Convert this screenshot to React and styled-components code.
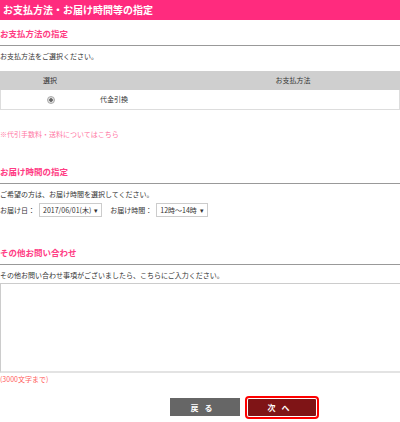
import React from "react";
import styled, { createGlobalStyle } from "styled-components";

const Global = createGlobalStyle`
  body { margin: 0; background: #fff; font-family: "Noto Sans CJK JP", "Liberation Sans", sans-serif; color: #333; }
`;

const Page = styled.div`
  width: 400px;
  height: 422px;
  overflow: hidden;
  font-size: 7px;
`;

const Header = styled.div`
  height: 20px;
  background: #ff2b7e;
  color: #fff;
  font-weight: bold;
  font-size: 10px;
  line-height: 20px;
  padding-left: 3px;
`;

const SectionTitle = styled.div`
  color: #ff3c84;
  font-weight: bold;
  font-size: 8.5px;
  margin-top: ${(p) => p.top}px;
  padding-bottom: 5px;
  border-bottom: 1px solid #999;
  line-height: 14px;
`;

const Text = styled.div`
  line-height: 10px;
  margin-top: ${(p) => p.top || 4}px;
`;

const Table = styled.div`
  margin-top: 10px;
  display: grid;
  grid-template-columns: 100px 1fr;
`;

const Th = styled.div`
  background: #cfcfcf;
  height: 19px;
  line-height: 19px;
  text-align: center;
  padding-left: ${(p) => p.pl || 0}px;
`;

const Td = styled.div`
  height: 19px;
  line-height: 19px;
  border-bottom: 1px solid #ddd;
  border-left: ${(p) => (p.first ? "1px solid #ddd" : "none")};
  border-right: ${(p) => (p.last ? "1px solid #ddd" : "none")};
  display: flex;
  align-items: center;
  justify-content: ${(p) => (p.first ? "center" : "flex-start")};
`;

const Radio = styled.span`
  width: 6px;
  height: 6px;
  border-radius: 50%;
  border: 1px solid #aaa;
  background: radial-gradient(circle, #666 0 1.5px, #ddd 2px);
`;

const Note = styled.div`
  color: #ff77a4;
  margin-top: 19px;
  line-height: 10px;
`;

const Row = styled.div`
  display: flex;
  align-items: center;
  gap: 4px;
  margin-top: 4px;
`;

const Select = styled.span`
  border: 1px solid #ccc;
  height: 12px;
  line-height: 12px;
  padding: 0 3px;
  margin-right: 4px;
  display: inline-flex;
  gap: 3px;
`;

const TextArea = styled.div`
  margin-top: 3px;
  height: 87px;
  border: 1px solid #ccc;
  border-right: none;
  border-bottom: 2px solid #e3e3e3;
`;

const Limit = styled.div`
  color: #ff6060;
  line-height: 10px;
  margin-top: 1px;
`;

const Buttons = styled.div`
  display: flex;
  justify-content: center;
  align-items: center;
  gap: 8px;
  margin-top: 14px;
  padding-left: 85px;
`;

const Button = styled.div`
  width: ${(p) => (p.primary ? 68 : 70)}px;
  height: ${(p) => (p.primary ? 17 : 18)}px;
  background: ${(p) => (p.primary ? "#7f1416" : "#666")};
  color: #fff;
  font-weight: bold;
  font-size: 8px;
  letter-spacing: 6px;
  display: flex;
  align-items: center;
  justify-content: center;
  ${(p) => p.primary && "outline: 2px solid #f00; outline-offset: 1px; border-radius: 1px;"}
`;

export default function App() {
  return (
    <Page>
      <Global />
      <Header>お支払方法・お届け時間等の指定</Header>
      <SectionTitle top={6}>お支払方法の指定</SectionTitle>
      <Text top={5}>お支払方法をご選択ください。</Text>
      <Table>
        <Th>選択</Th>
        <Th pl={86}>お支払方法</Th>
        <Td first><Radio /></Td>
        <Td last>代金引換</Td>
      </Table>
      <Note>※代引手数料・送料についてはこちら</Note>
      <SectionTitle top={25}>お届け時間の指定</SectionTitle>
      <Text top={5}>ご希望の方は、お届け時間を選択してください。</Text>
      <Row>
        お届け日：<Select>2017/06/01(木)<span>▾</span></Select>
        お届け時間：<Select>12時～14時<span>▾</span></Select>
      </Row>
      <SectionTitle top={28}>その他お問い合わせ</SectionTitle>
      <Text top={5}>その他お問い合わせ事項がございましたら、こちらにご入力ください。</Text>
      <TextArea />
      <Limit>(3000文字まで)</Limit>
      <Buttons>
        <Button>戻る</Button>
        <Button primary>次へ</Button>
      </Buttons>
    </Page>
  );
}
